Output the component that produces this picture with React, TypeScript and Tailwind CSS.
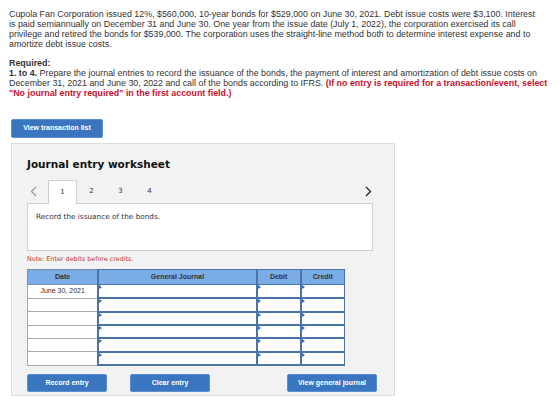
const rows = ["June 30, 2021", "", "", "", "", ""];

function Btn({ label, className = "" }: { label: string; className?: string }) {
  return (
    <button
      className={`h-[18px] bg-[#3a76bf] text-white text-[7px] font-bold rounded-[2px] border border-[#5b8fd0] font-['Liberation_Sans',Arial,sans-serif] ${className}`}
    >
      {label}
    </button>
  );
}

// journal input cell with the little blue marker in its corner
function InputCell({ className = "" }: { className?: string }) {
  return (
    <td className={`relative p-0 border border-[#4a73a8] border-b-2 bg-white ${className}`}>
      <span className="absolute left-0 top-0 w-0 h-0 border-t-[2px] border-b-[2px] border-l-[3px] border-t-transparent border-b-transparent border-l-[#2f6fc0]" />
    </td>
  );
}

function Chevron({ dir, className = "" }: { dir: "left" | "right"; className?: string }) {
  return (
    <svg width="7" height="11" viewBox="0 0 7 11" className={className}>
      <path
        d={dir === "left" ? "M6 1 L1.5 5.5 L6 10" : "M1 1 L5.5 5.5 L1 10"}
        fill="none"
        stroke="currentColor"
        strokeWidth="1.3"
      />
    </svg>
  );
}

export default function App() {
  return (
    <div className="w-[560px] h-[403px] overflow-hidden bg-white font-['Liberation_Sans',Arial,sans-serif] text-[#333]">
      <div className="px-[9px] pt-[9px] text-[8.9px] leading-[10px] whitespace-nowrap">
        <p>
          Cupola Fan Corporation issued 12%, $560,000, 10-year bonds for $529,000 on June 30, 2021. Debt issue costs were $3,100. Interest
          <br />
          is paid semiannually on December 31 and June 30. One year from the issue date (July 1, 2022), the corporation exercised its call
          <br />
          privilege and retired the bonds for $539,000. The corporation uses the straight-line method both to determine interest expense and to
          <br />
          amortize debt issue costs.
        </p>
        <p className="mt-[9px] font-bold">Required:</p>
        <p>
          <span className="font-bold">1. to 4.</span> Prepare the journal entries to record the issuance of the bonds, the payment of interest
          and amortization of debt issue costs on
          <br />
          December 31, 2021 and June 30, 2022 and call of the bonds according to IFRS.{" "}
          <span className="font-bold text-[#c8102e]">
            (If no entry is required for a transaction/event, select
            <br />
            "No journal entry required" in the first account field.)
          </span>
        </p>
      </div>

      <div className="flex ml-[11px] mt-[21px]">
        <Btn label="View transaction list" className="w-[92px] h-[19px]" />
      </div>

      <div className="ml-[11px] mt-[5px] w-[384px] h-[253px] bg-[#f2f2f2] border border-[#dcdcdc] px-[15px] pt-[13px] font-['DejaVu_Sans',Verdana,sans-serif]">
        <h2 className="text-[10.5px] font-bold text-[#111]">Journal entry worksheet</h2>

        <div className="flex items-end mt-[6px] h-[24px] w-[346px]">
          <span className="w-[21px] pl-[3px] pb-[6px] text-[#9a9a9a]">
            <Chevron dir="left" />
          </span>
          {[1, 2, 3, 4].map((n) => (
            <div
              key={n}
              className={`w-[29px] h-[24px] flex items-center justify-center text-[7px] text-[#333] ${
                n === 1 ? "bg-white border border-b-0 border-[#cfcfcf] relative top-[1px] z-10" : ""
              }`}
            >
              {n}
            </div>
          ))}
          <span className="ml-auto pr-[1px] pb-[6px] text-[#222]">
            <Chevron dir="right" />
          </span>
        </div>

        <div className="w-[346px] h-[48px] bg-white border border-[#cfcfcf] px-[8px] pt-[8px] text-[7.3px] text-[#333]">
          Record the issuance of the bonds.
        </div>

        <p className="mt-[4px] text-[6.4px] text-[#c0392b]">Note: Enter debits before credits.</p>

        <table className="mt-[5px] w-[318px] border-collapse border border-[#9a9a9a] font-['Liberation_Sans',Arial,sans-serif] text-[7px]">
          <thead>
            <tr className="h-[15px] bg-[#7aade6] text-[#333]">
              <th className="w-[71px] border border-[#7b8ea6] font-bold">Date</th>
              <th className="w-[159px] border border-[#4a73a8] border-l-2 font-bold">General Journal</th>
              <th className="w-[44px] border border-[#4a73a8] border-l-2 font-bold">Debit</th>
              <th className="w-[44px] border border-[#4a73a8] border-l-2 font-bold">Credit</th>
            </tr>
          </thead>
          <tbody>
            {rows.map((d, i) => (
              <tr key={i} className="h-[13.4px]">
                <td className="border border-[#a9a9a9] bg-white text-center text-[#333]">{d}</td>
                <InputCell className="border-l-2" />
                <InputCell className="border-l-2" />
                <InputCell className="border-l-2" />
              </tr>
            ))}
          </tbody>
        </table>

        <div className="flex mt-[8px]">
          <Btn label="Record entry" className="w-[80px]" />
          <Btn label="Clear entry" className="w-[80px] ml-[23px]" />
          <Btn label="View general journal" className="w-[90px] ml-auto mr-[2px]" />
        </div>
      </div>
    </div>
  );
}
